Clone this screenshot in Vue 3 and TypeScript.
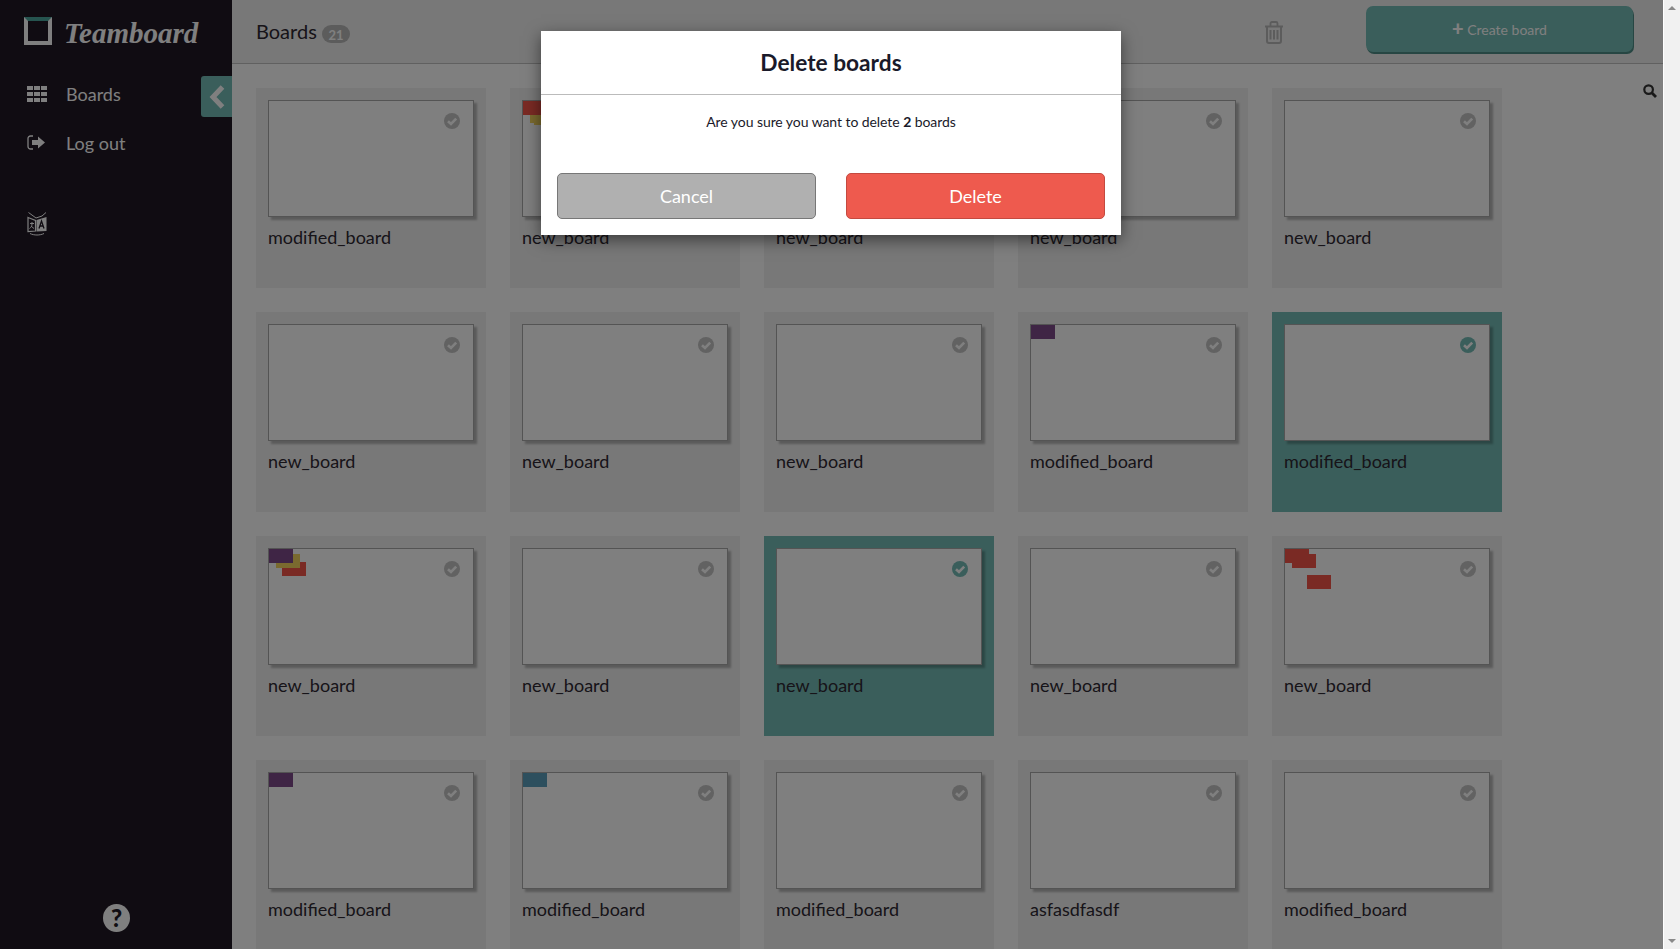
<script setup lang="ts">
interface Note {
  x: number
  y: number
  color: string
}

interface Board {
  title: string
  selected?: boolean
  notes?: Note[]
}

const PURPLE = '#7e4a8a'
const OLIVE = '#f4d45e'
const RED = '#f45448'
const BLUE = '#5a9fbc'

const boards: Board[] = [
  { title: 'modified_board' },
  { title: 'new_board', notes: [{ x: 11, y: 10, color: OLIVE }, { x: 7, y: 8, color: OLIVE }, { x: 0, y: 0, color: RED }] },
  { title: 'new_board' },
  { title: 'new_board' },
  { title: 'new_board' },
  { title: 'new_board' },
  { title: 'new_board' },
  { title: 'new_board' },
  { title: 'modified_board', notes: [{ x: 0, y: 0, color: PURPLE }] },
  { title: 'modified_board', selected: true },
  { title: 'new_board', notes: [{ x: 13, y: 13, color: RED }, { x: 7, y: 5, color: OLIVE }, { x: 0, y: 0, color: PURPLE }] },
  { title: 'new_board' },
  { title: 'new_board', selected: true },
  { title: 'new_board' },
  { title: 'new_board', notes: [{ x: 0, y: 0, color: RED }, { x: 7, y: 5, color: RED }, { x: 22, y: 26, color: RED }] },
  { title: 'modified_board', notes: [{ x: 0, y: 0, color: PURPLE }] },
  { title: 'modified_board', notes: [{ x: 0, y: 0, color: BLUE }] },
  { title: 'modified_board' },
  { title: 'asfasdfasdf' },
  { title: 'modified_board' },
]
</script>

<template>
  <div class="page">
    <aside class="sidebar">
      <div class="logo">
        <span class="logo-mark"></span>
        <span class="logo-text">Teamboard</span>
      </div>

      <a class="nav-item">
        <svg class="nav-icon" width="20" height="16" viewBox="0 0 20 16" fill="currentColor">
          <rect x="0" y="0" width="6" height="4" />
          <rect x="7" y="0" width="6" height="4" />
          <rect x="14" y="0" width="6" height="4" />
          <rect x="0" y="6" width="6" height="4" />
          <rect x="7" y="6" width="6" height="4" />
          <rect x="14" y="6" width="6" height="4" />
          <rect x="0" y="12" width="6" height="4" />
          <rect x="7" y="12" width="6" height="4" />
          <rect x="14" y="12" width="6" height="4" />
        </svg>
        Boards
      </a>
      <a class="nav-item">
        <svg class="nav-icon" width="20" height="16" viewBox="0 0 20 16">
          <path d="M6 1H3.500A2.500 2.500 0 0 0 1 3.500v8A2.500 2.500 0 0 0 3.500 14H6" fill="none" stroke="currentColor" stroke-width="1.300" />
          <path d="M5 5h6V1.500L18 7.500l-7 6V10H5z" fill="currentColor" />
        </svg>
        Log out
      </a>

      <svg class="translate-icon" width="22" height="25" viewBox="0 0 22 25">
        <path d="M2 6.500 9.500 9.500V20L2 20.500z" fill="none" stroke="currentColor" stroke-width="1.200" />
        <path d="M10.500 9 20.500 6V20L10.500 20.500z" fill="currentColor" />
        <path d="M2.500 1.500 10 7l6-2 4-3.500" fill="none" stroke="currentColor" stroke-width="1" />
        <path d="M4 22.500c4 2 10 2 14 0" fill="none" stroke="currentColor" stroke-width="1" />
        <path d="M4 12.500h4M6 11v2c0 2-1 3.500-2.500 4.500M5 15l3 2.500" fill="none" stroke="currentColor" stroke-width="1" />
        <path d="M13 17.500 15.500 10l2.500 7.500M14 15h3" fill="none" stroke="#201824" stroke-width="1.300" />
      </svg>

      <button class="collapse-tab" type="button">
        <svg width="16" height="24" viewBox="0 0 16 24">
          <polyline points="13.500,2 4,12 13.500,22" fill="none" stroke="#fff" stroke-width="5" />
        </svg>
      </button>

      <span class="help">?</span>
    </aside>

    <main class="content">
      <header class="topbar">
        <h1 class="page-title">Boards <span class="badge">21</span></h1>
        <svg class="trash" width="20" height="23" viewBox="0 0 20 23" fill="none" stroke="currentColor">
          <path d="M1 5.500h18" stroke-width="2" />
          <path d="M6.500 5V2.500A1.500 1.500 0 0 1 8 1h4a1.500 1.500 0 0 1 1.500 1.500V5" stroke-width="1.800" />
          <path d="M3 5.500V20a2 2 0 0 0 2 2h10a2 2 0 0 0 2-2V5.500" stroke-width="2" />
          <path d="M6.500 9v9.500M10 9v9.500M13.500 9v9.500" stroke-width="2" />
        </svg>
        <button class="create-btn" type="button"><span class="plus">+</span> Create board</button>
      </header>

      <svg class="search" width="14" height="14" viewBox="0 0 14 14" fill="none" stroke="currentColor">
        <circle cx="5.600" cy="5.600" r="4.300" stroke-width="2.200" />
        <path d="M9 9l4 4" stroke-width="2.800" />
      </svg>

      <section class="grid">
        <article v-for="(board, i) in boards" :key="i" class="card" :class="{ selected: board.selected }">
          <div class="thumb">
            <span
              v-for="(note, n) in board.notes"
              :key="n"
              class="note"
              :style="{ left: note.x + 'px', top: note.y + 'px', background: note.color }"
            ></span>
            <svg class="check" width="16" height="16" viewBox="0 0 16 16">
              <circle cx="8" cy="8" r="8" class="check-bg" />
              <polyline points="4,8.200 7,11 12.200,5.600" fill="none" stroke="#fff" stroke-width="2.600" />
            </svg>
          </div>
          <div class="card-title">{{ board.title }}</div>
        </article>
      </section>
    </main>

    <div class="scrollbar">
      <span class="arrow up"></span>
      <span class="arrow down"></span>
    </div>

    <div class="overlay">
      <div class="modal">
        <h2 class="modal-title">Delete boards</h2>
        <p class="modal-text">Are you sure you want to delete <b>2</b> boards</p>
        <div class="modal-actions">
          <button class="modal-btn cancel" type="button">Cancel</button>
          <button class="modal-btn delete" type="button">Delete</button>
        </div>
      </div>
    </div>
  </div>
</template>

<style>
html,
body {
  margin: 0;
  overflow: hidden;
}
</style>

<style scoped>
.page {
  position: relative;
  display: flex;
  height: 949px;
  overflow: hidden;
  font-family: Lato, "Liberation Sans", sans-serif;
  color: #2e2832;
}

.sidebar {
  position: relative;
  flex: 0 0 232px;
  display: flex;
  flex-direction: column;
  background: #201824;
  color: #fff;
}

.logo {
  display: flex;
  align-items: center;
  gap: 12px;
  padding: 17px 0 0 24px;
  height: 28px;
  margin-bottom: 24px;
}

.logo-mark {
  box-sizing: border-box;
  width: 28px;
  height: 28px;
  border: 4px solid #fff;
  border-top-color: #4da89f;
}

.logo-text {
  margin-top: 4px;
  font-family: "Liberation Serif", serif;
  font-style: italic;
  font-weight: 700;
  font-size: 29px;
  line-height: 28px;
  color: #fff;
}

.nav-item {
  display: flex;
  align-items: center;
  height: 49px;
  padding-left: 27px;
  font-size: 18px;
  color: #fff;
}

.nav-icon {
  margin-right: 19px;
}

.translate-icon {
  margin: 44px 0 0 26px;
  color: #fff;
}

.collapse-tab {
  position: absolute;
  top: 76px;
  right: 0;
  width: 31px;
  height: 41px;
  padding: 0;
  border: none;
  border-radius: 3px 0 0 3px;
  background: #74bcb6;
  display: flex;
  align-items: center;
  justify-content: center;
}

.help {
  margin: auto 0 17px 103px;
  width: 27px;
  height: 28px;
  border-radius: 50%;
  background: #fff;
  color: #201824;
  font-weight: 900;
  font-size: 24px;
  line-height: 28px;
  text-align: center;
}

.content {
  position: relative;
  flex: 1;
  min-width: 0;
  background: #fff;
}

.topbar {
  display: flex;
  align-items: flex-start;
  box-sizing: border-box;
  height: 64px;
  padding: 6px 30px 0 24px;
  background: #f0f0f0;
  border-bottom: 1px solid #c0c0c0;
}

.page-title {
  margin: 12px auto 0 0;
  font-size: 20px;
  line-height: 26px;
  font-weight: 400;
}

.badge {
  display: inline-block;
  vertical-align: -1px;
  width: 28px;
  height: 18px;
  border-radius: 9px;
  background: #b8b8b8;
  color: #fff;
  font-size: 13px;
  font-weight: 700;
  line-height: 20px;
  text-align: center;
}

.trash {
  margin: 15px 82px 0 0;
  color: #b8b8b8;
}

.create-btn {
  box-sizing: border-box;
  width: 267px;
  height: 46px;
  padding: 0;
  border: none;
  border-radius: 7px;
  background: #74bcb6;
  box-shadow: 1px 2px 0 #4f8d86;
  color: #fff;
  font-family: inherit;
  font-size: 14px;
}

.plus {
  font-weight: 900;
  font-size: 20px;
  line-height: 14px;
  vertical-align: -1px;
}

.search {
  position: absolute;
  top: 84px;
  right: 6px;
  color: #333;
}

.grid {
  display: grid;
  grid-template-columns: repeat(5, 230px);
  gap: 24px;
  padding: 24px 0 0 24px;
}

.card {
  box-sizing: border-box;
  height: 200px;
  padding: 12px;
  background: #f0f0f0;
}

.card.selected {
  background: #74bcb6;
}

.thumb {
  position: relative;
  box-sizing: border-box;
  height: 117px;
  border: 1px solid #a8a8a8;
  background: #fff;
  box-shadow: 3px 3px 2px rgba(0, 0, 0, 0.25);
}

.note {
  position: absolute;
  width: 24px;
  height: 14px;
}

.check {
  position: absolute;
  top: 12px;
  right: 13px;
}

.check-bg {
  fill: #c4c4c4;
}

.selected .check-bg {
  fill: #74bcb6;
}

.card-title {
  margin-top: 9px;
  font-size: 18px;
  line-height: 22px;
}

.scrollbar {
  position: relative;
  flex: 0 0 17px;
  box-sizing: border-box;
  background: #f1f1f1;
  border-left: 1px solid #fff;
}

.arrow {
  position: absolute;
  left: 4px;
  border-left: 4px solid transparent;
  border-right: 4px solid transparent;
}

.arrow.up {
  top: 6px;
  border-bottom: 4px solid #8a8a8a;
}

.arrow.down {
  bottom: 6px;
  border-top: 4px solid #8a8a8a;
}

.overlay {
  position: absolute;
  inset: 0 17px 0 0;
  box-sizing: border-box;
  display: flex;
  justify-content: center;
  align-items: flex-start;
  padding: 31px 1px 0 0;
  background: rgba(0, 0, 0, 0.5);
}

.modal {
  box-sizing: border-box;
  width: 580px;
  height: 204px;
  background: #fff;
  box-shadow: 0 5px 15px rgba(0, 0, 0, 0.5);
  color: #1a1a2a;
}

.modal-title {
  box-sizing: border-box;
  height: 64px;
  margin: 0;
  border-bottom: 1px solid #bbb;
  font-size: 22.7px;
  font-weight: 700;
  line-height: 64px;
  text-align: center;
}

.modal-text {
  margin: 17px 0 0;
  font-size: 14px;
  letter-spacing: -0.07px;
  line-height: 20px;
  text-align: center;
}

.modal-actions {
  display: flex;
  justify-content: space-between;
  padding: 41px 16px 0;
}

.modal-btn {
  box-sizing: border-box;
  width: 259px;
  height: 46px;
  border-radius: 5px;
  color: #fff;
  font-family: inherit;
  font-size: 18px;
}

.cancel {
  border: 1px solid #777;
  background: #b0b0b0;
}

.delete {
  border: 1px solid #c44a40;
  background: #ee5a4e;
}
</style>
